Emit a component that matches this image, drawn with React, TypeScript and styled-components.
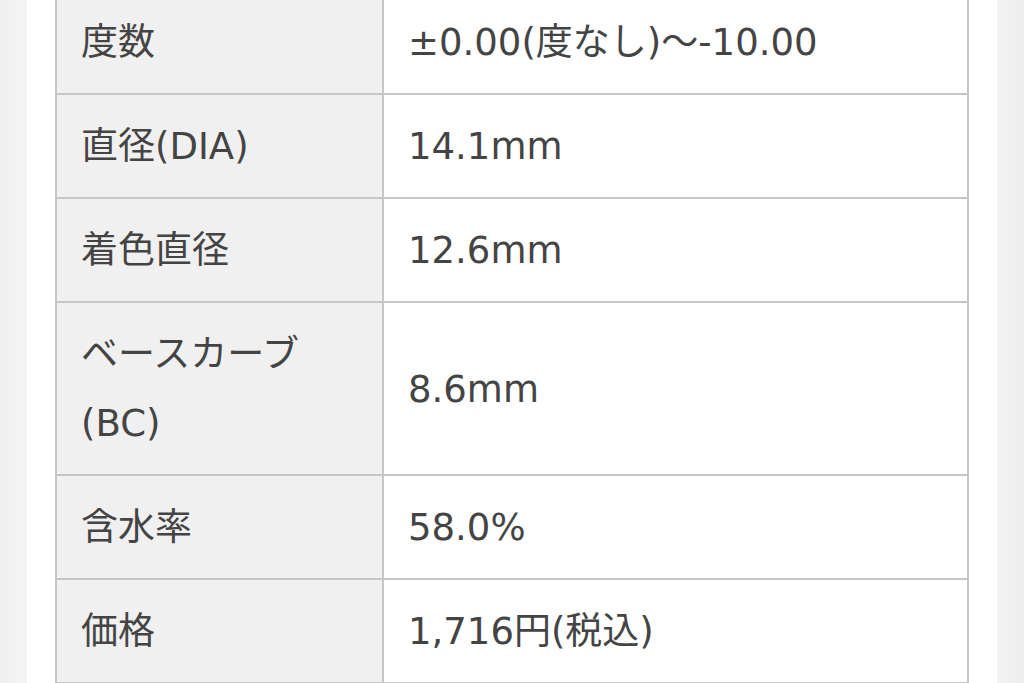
import React from "react";
import styled, { createGlobalStyle } from "styled-components";

const GlobalStyle = createGlobalStyle`
    html, body {
        margin: 0;
        padding: 0;
        background-color: #f0f0f0;
        overflow: hidden;
    }
`;

const Page = styled.div`
    width: 100%;
    height: 683px;
    overflow: hidden;
    display: flex;
    justify-content: center;
    background: linear-gradient(to right, #eeeeee 0%, #f3f3f3 2%, #f3f3f3 97%, #eeeeee 100%);
`;

const Card = styled.div`
    width: 970px;
    box-sizing: border-box;
    background-color: #FFFFFF;
    padding: 0 28px;
    margin-top: -11px;
`;

const SpecTable = styled.table`
    width: 100%;
    border-collapse: collapse;
    font-family: "DejaVu Sans", "Noto Sans CJK JP", sans-serif;
    font-size: 37px;
    font-weight: 400;
    line-height: 69px;
    color: #444444;
`;

const Cell = styled.td<{ $head?: boolean }>`
    border: 2px solid #c6c6c6;
    padding: 17px 20px 16px 24px;
    vertical-align: middle;
    white-space: nowrap;
    width: ${props => props.$head ? "281px" : "auto"};
    background-color: ${props => props.$head ? "#f0f0f0" : "#FFFFFF"};
`;

const specs: { label: React.ReactNode; value: string }[] = [
    { label: "度数", value: "±0.00(度なし)〜-10.00" },
    { label: "直径(DIA)", value: "14.1mm" },
    { label: "着色直径", value: "12.6mm" },
    { label: <>ベースカーブ<br />(BC)</>, value: "8.6mm" },
    { label: "含水率", value: "58.0%" },
    { label: "価格", value: "1,716円(税込)" },
    { label: "", value: "" },
];

export default function App(): React.JSX.Element {
    return (<>
        <GlobalStyle />
        <Page>
            <Card>
                <SpecTable>
                    <tbody>
                        {specs.map((spec, i) => (
                            <tr key={i}>
                                <Cell $head>{spec.label}</Cell>
                                <Cell>{spec.value}</Cell>
                            </tr>
                        ))}
                    </tbody>
                </SpecTable>
            </Card>
        </Page>
    </>);
}
